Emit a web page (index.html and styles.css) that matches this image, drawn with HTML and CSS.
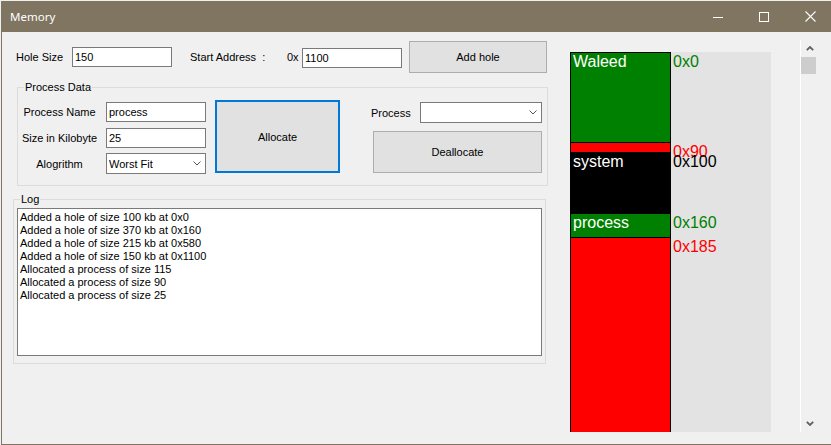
FILE: index.html
```html
<!DOCTYPE html>
<html>
<head>
<meta charset="utf-8">
<title>Memory</title>
<link rel="stylesheet" href="styles.css">
</head>
<body>
<div class="window">
  <div class="titlebar">
    <span class="title">Memory</span>
    <div class="controls">
      <span class="ctl"><svg width="10" height="10" viewBox="0 0 10 10"><line x1="0" y1="5.5" x2="10" y2="5.5" stroke="#fff" stroke-width="1"/></svg></span>
      <span class="ctl"><svg width="10" height="10" viewBox="0 0 10 10"><rect x="0.5" y="0.5" width="9" height="9" fill="none" stroke="#fff" stroke-width="1"/></svg></span>
      <span class="ctl"><svg width="11" height="11" viewBox="0 0 11 11"><line x1="0.5" y1="0.5" x2="10.5" y2="10.5" stroke="#fff" stroke-width="1.1"/><line x1="10.5" y1="0.5" x2="0.5" y2="10.5" stroke="#fff" stroke-width="1.1"/></svg></span>
    </div>
  </div>
  <div class="client">
    <div class="left">
      <div class="row1">
        <span class="hole">Hole Size</span>
        <div class="input w100">150</div>
        <span class="start">Start Address &nbsp;:</span>
        <span class="hex">0x</span>
        <div class="input w100 addr">1100</div>
        <div class="btn addhole">Add hole</div>
      </div>

      <div class="group pd">
        <span class="legend">Process Data</span>
        <div class="pd-body">
          <div class="fields">
            <div class="frow"><span class="flbl">Process Name</span><div class="input">process</div></div>
            <div class="frow"><span class="flbl">Size in Kilobyte</span><div class="input">25</div></div>
            <div class="frow algo"><span class="flbl">Alogrithm</span><div class="input combo"><span>Worst Fit</span><svg class="chev" width="8" height="5" viewBox="0 0 8 5"><polyline points="0.5,0.5 4,4 7.5,0.5" fill="none" stroke="#555" stroke-width="1"/></svg></div></div>
          </div>
          <div class="btn allocate">Allocate</div>
          <div class="side">
            <div class="side-row"><span class="plbl">Process</span><div class="input combo pcombo"><span></span><svg class="chev" width="8" height="5" viewBox="0 0 8 5"><polyline points="0.5,0.5 4,4 7.5,0.5" fill="none" stroke="#555" stroke-width="1"/></svg></div></div>
            <div class="btn dealloc">Deallocate</div>
          </div>
        </div>
      </div>

      <div class="group log">
        <span class="legend">Log</span>
        <div class="logbox">
          <div>Added a hole of size 100 kb at 0x0</div>
          <div>Added a hole of size 370 kb at 0x160</div>
          <div>Added a hole of size 215 kb at 0x580</div>
          <div>Added a hole of size 150 kb at 0x1100</div>
          <div>Allocated a process of size 115</div>
          <div>Allocated a process of size 90</div>
          <div>Allocated a process of size 25</div>
        </div>
      </div>
    </div>

    <div class="scroller">
      <div class="viewport">
        <div class="memview">
          <div class="mrow" style="height:90px"><div class="blk green">Waleed</div><div class="adr c-green">0x0</div></div>
          <div class="mrow" style="height:10px"><div class="blk red"></div><div class="adr c-red">0x90</div></div>
          <div class="mrow" style="height:61px"><div class="blk black">system</div><div class="adr c-black">0x100</div></div>
          <div class="mrow" style="height:24px"><div class="blk green">process</div><div class="adr c-green">0x160</div></div>
          <div class="mrow last"><div class="blk red"></div><div class="adr c-red">0x185</div></div>
        </div>
      </div>
      <div class="vscroll">
        <div class="arrow"><svg width="8" height="5" viewBox="0 0 8 5"><polyline points="0.8,4.2 4,1 7.2,4.2" fill="none" stroke="#606060" stroke-width="1.8"/></svg></div>
        <div class="thumb"></div>
        <div class="spacer"></div>
        <div class="arrow"><svg width="8" height="5" viewBox="0 0 8 5"><polyline points="0.8,0.8 4,4 7.2,0.8" fill="none" stroke="#606060" stroke-width="1.8"/></svg></div>
      </div>
    </div>
  </div>
</div>
</body>
</html>
```

FILE: styles.css
```css
* { box-sizing: border-box; }
html, body { margin: 0; padding: 0; }
body {
  background: #f0f0f0;
  font-family: "Liberation Sans", Arial, sans-serif;
  font-size: 11px;
  color: #000;
  width: 831px;
  height: 445px;
  overflow: hidden;
}
.window { margin: 1px 0 0 1px; width: 830px; }

.titlebar {
  height: 31px;
  background: #7f7560;
  display: flex;
  align-items: center;
  color: #fff;
}
.title {
  flex: 1;
  padding-left: 9px;
  font-family: "Noto Sans", "Liberation Sans", sans-serif;
  font-size: 11.5px;
}
.controls { display: flex; height: 31px; margin-right: -2px; }
.ctl { width: 46px; display: flex; align-items: center; justify-content: center; }

.client {
  display: flex;
  height: 413px;
  border-left: 1px solid #7f7560;
  border-bottom: 1px solid #7f7560;
}

.left { width: 554px; flex: none; }

.row1 {
  display: flex;
  align-items: center;
  height: 32px;
  margin-top: 9px;
  padding-left: 14px;
}
.hole { width: 56px; }
.input {
  height: 20px;
  border: 1px solid #7a7a7a;
  background: #fff;
  padding: 0 2px;
  display: flex;
  align-items: center;
}
.w100 { width: 100px; }
.start { margin-left: 18px; width: 97px; }
.hex { width: 15px; }
.addr { margin-top: 2px; }
.btn {
  background: #e1e1e1;
  border: 1px solid #adadad;
  display: flex;
  align-items: center;
  justify-content: center;
}
.addhole { margin-left: 7px; width: 138px; height: 32px; }

.group { position: relative; border: 1px solid #dcdcdc; }
.legend {
  position: absolute;
  top: -8px;
  left: 6px;
  padding: 0 1px;
  background: #f0f0f0;
  line-height: 14px;
}

.pd { margin: 14px 0 0 15px; width: 531px; height: 99px; }
.pd-body { display: flex; align-items: flex-start; padding-top: 12px; }
.fields { display: flex; flex-direction: column; margin-top: 2px; }
.frow { display: flex; align-items: center; gap: 5px; }
.frow + .frow { margin-top: 6px; }
.frow.algo { margin-top: 5px; }
.flbl { width: 83px; text-align: center; }
.fields .input { width: 100px; }
.algo .input { height: 21px; }
.combo { justify-content: space-between; padding-right: 4px; }
.chev { flex: none; }
.allocate { margin-left: 9px; width: 125px; height: 73px; border: 2px solid #0078d7; }
.side { margin-left: 31px; display: flex; flex-direction: column; }
.side-row { display: flex; align-items: center; margin-top: 2px; }
.plbl { width: 49px; }
.pcombo { width: 122px; height: 21px; }
.dealloc { margin: 8px 0 0 2px; width: 169px; height: 42px; }

.log { margin: 13px 0 0 11px; width: 533px; height: 165px; }
.logbox {
  margin: 8px 0 0 3px;
  width: 525px;
  height: 148px;
  border: 1px solid #7a7a7a;
  background: #fff;
  padding: 2px 2px;
  line-height: 13px;
}

.scroller { display: flex; margin-top: 8px; height: 392px; flex: none; }
.viewport { width: 244px; overflow: hidden; padding: 12px 0 0 14px; }
.memview {
  width: 201px;
  height: 400px;
  background: #e3e3e3;
  display: flex;
  flex-direction: column;
  font-family: "Liberation Sans", Arial, sans-serif;
  font-size: 16px;
  line-height: 16px;
}
.mrow { display: flex; flex: none; }
.mrow.last { flex: 1; }
.blk {
  width: 101px;
  flex: none;
  border-style: solid;
  border-color: #000;
  border-width: 1px 1px 0 1px;
  color: #fff;
  padding: 1px 0 0 2px;
  white-space: nowrap;
}
.adr { padding: 2px 0 0 2px; white-space: nowrap; }
.green { background: #008000; }
.red { background: #ff0000; }
.black { background: #000; }
.c-green { color: #008000; }
.c-red { color: #ff0000; }
.c-black { color: #000; }

.vscroll {
  width: 18px;
  flex: none;
  border-left: 1px solid #fff;
  display: flex;
  flex-direction: column;
}
.arrow { height: 17px; display: flex; align-items: center; justify-content: center; }
.thumb { height: 17px; width: 15px; background: #cdcdcd; }
.spacer { flex: 1; }
```
